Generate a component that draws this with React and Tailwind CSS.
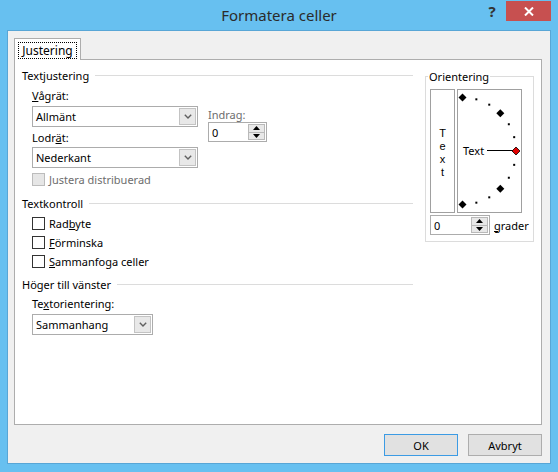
import React from "react";

const font = { fontFamily: '"Noto Sans", "Open Sans", sans-serif' };

function Chevron() {
  return (
    <svg width="8" height="5" viewBox="0 0 8 5">
      <path d="M0.8 0.8 L4 4 L7.2 0.8" fill="none" stroke="#606060" strokeWidth="1.4" />
    </svg>
  );
}

function Combo({ w, value }) {
  return (
    <div className={`${w} h-[21px] border border-[#acacac] bg-white flex items-stretch`}>
      <div className="flex-1 pl-[3px] flex items-center text-black leading-none">{value}</div>
      <div className="w-[17px] m-[1px] border border-[#c3c3c3] bg-[#e8e8e8] flex items-center justify-center">
        <Chevron />
      </div>
    </div>
  );
}

function Spinner({ w }) {
  return (
    <div className={`${w} h-[20px] border border-[#acacac] bg-white flex items-stretch`}>
      <div className="flex-1 pl-[3px] flex items-center leading-none text-black">0</div>
      <div className="w-[17px] flex flex-col my-[1px] mr-[1px]">
        <div className="flex-1 border border-[#b9b9b9] bg-[#e8e8e8] flex items-center justify-center">
          <svg width="7" height="4" viewBox="0 0 7 4"><path d="M0 4 L3.5 0 L7 4 Z" fill="#000" /></svg>
        </div>
        <div className="flex-1 border border-t-0 border-[#b9b9b9] bg-[#e8e8e8] flex items-center justify-center">
          <svg width="7" height="4" viewBox="0 0 7 4"><path d="M0 0 L3.5 4 L7 0 Z" fill="#000" /></svg>
        </div>
      </div>
    </div>
  );
}

function Check({ label, disabled }) {
  return (
    <div className="h-[13px] flex items-center">
      <div
        className={`w-[13px] h-[13px] border ${disabled ? "border-[#bcbcbc] bg-[#e6e6e6]" : "border-[#333333] bg-white"}`}
      />
      <div className={`ml-[4px] leading-none ${disabled ? "text-[#6d6d6d]" : "text-black"}`}>{label}</div>
    </div>
  );
}

function Header({ children }) {
  return (
    <div className="h-[16px] flex items-center">
      <div className="leading-none text-black whitespace-nowrap">{children}</div>
      <div className="flex-1 h-px bg-[#dcdcdc] ml-[6px]" />
    </div>
  );
}

function Arc() {
  const cx = 4.5, cy = 61, r = 53.5;
  const items = [];
  for (let i = 0; i <= 12; i++) {
    const a = ((90 - i * 15) * Math.PI) / 180;
    const x = cx + r * Math.cos(a);
    const y = cy - r * Math.sin(a);
    if (i === 6) {
      items.push(
        <path key={i} d={`M${x} ${y - 4} L${x + 4} ${y} L${x} ${y + 4} L${x - 4} ${y} Z`} fill="#e00000" stroke="#000" strokeWidth="0.8" />
      );
    } else if (i % 3 === 0) {
      items.push(
        <path key={i} d={`M${x} ${y - 4} L${x + 4} ${y} L${x} ${y + 4} L${x - 4} ${y} Z`} fill="#000" />
      );
    } else {
      items.push(<rect key={i} x={x - 1} y={y - 1} width="2" height="2" fill="#000" />);
    }
  }
  return (
    <svg width="63" height="122" viewBox="0 0 63 122" className="block">
      <line x1="29" y1="60.5" x2="55" y2="60.5" stroke="#000" strokeWidth="1" />
      {items}
    </svg>
  );
}

export default function App() {
  return (
    <div className="w-[558px] h-[472px] bg-[#67c0f0] flex flex-col text-[11px] overflow-hidden" style={font}>
      <div className="h-[30px] grid grid-cols-[1fr_auto_1fr]">
        <div />
        <div className="text-[15px] text-[#2b2b2b] leading-[30px]">Formatera celler</div>
        <div className="flex justify-end items-start pr-[7px]">
          <div className="w-[28px] h-[21px] flex items-center justify-center font-bold text-[15px] text-[#333] leading-none pt-[2px]">?</div>
          <div className="w-[45px] h-[20px] mt-[1px] bg-[#c75050] flex items-center justify-center">
            <svg width="10" height="9" viewBox="0 0 10 9">
              <path d="M1 0.5 L9 8.5 M9 0.5 L1 8.5" stroke="#fff" strokeWidth="2" />
            </svg>
          </div>
        </div>
      </div>
      <div className="mx-[7px] h-[434px] border border-[#58a6d6] bg-[#f0f0f0] flex flex-col px-[6px] pt-[7px]">
        <div className="relative z-10 w-[67px] h-[22px] -mb-[1px] bg-white border border-b-0 border-[#adadad] flex items-center justify-center">
          <div className="w-[59px] border border-dotted border-black h-[17px] mt-[2px] flex items-center justify-center leading-none text-black text-[12px]">Justering</div>
        </div>
        <div className="w-[528px] h-[366px] bg-white border border-[#adadad] flex pl-[7px] pt-[7px]">
          <div className="w-[391px] flex flex-col">
            <Header>Textjustering</Header>
            <div className="flex pl-[10px]">
              <div className="w-[166px] flex flex-col">
                <div className="mt-[4px] h-[16px] flex items-center leading-none"><span><span className="underline">V</span>ågrät:</span></div>
                <div className="mt-[3px]"><Combo w="w-[166px]" value="Allmänt" /></div>
                <div className="mt-[2px] h-[16px] flex items-center leading-none"><span>Lodr<span className="underline">ä</span>t:</span></div>
                <div className="mt-[2px]"><Combo w="w-[166px]" value="Nederkant" /></div>
                <div className="mt-[5px]"><Check label="Justera distribuerad" disabled /></div>
              </div>
              <div className="ml-[10px] flex flex-col">
                <div className="mt-[24px] h-[14px] flex items-center leading-none text-[#6d6d6d]">Indrag:</div>
                <div className="mt-[1px]"><Spinner w="w-[59px]" /></div>
              </div>
            </div>
            <div className="mt-[9px]"><Header>Textkontroll</Header></div>
            <div className="pl-[10px] mt-[6px] flex flex-col gap-[6px]">
              <Check label={<span>Rad<span className="underline">b</span>yte</span>} />
              <Check label={<span><span className="underline">F</span>örminska</span>} />
              <Check label={<span><span className="underline">S</span>ammanfoga celler</span>} />
            </div>
            <div className="mt-[8px]"><Header>Höger till vänster</Header></div>
            <div className="pl-[10px] flex flex-col">
              <div className="mt-[3px] h-[16px] flex items-center leading-none"><span>Te<span className="underline">x</span>torientering:</span></div>
              <div className="mt-[3px]"><Combo w="w-[121px]" value="Sammanhang" /></div>
            </div>
          </div>
          <div className="ml-[12px] mt-[9px] w-[109px] h-[166px] border border-[#dcdcdc] relative pl-[4px] pt-[12px]">
            <div className="absolute -top-[9px] left-[2px] bg-white px-[1px] h-[16px] flex items-center leading-none text-black">Orientering</div>
            <div className="flex gap-[2px]">
              <div
                className="w-[25px] h-[124px] border border-[#a0a0a0] flex flex-col items-center justify-center pt-[4px] leading-[13px] text-black"
                style={{ fontFamily: '"Liberation Sans", Arial, sans-serif' }}
              >
                <span>T</span><span>e</span><span>x</span><span>t</span>
              </div>
              <div className="w-[65px] h-[124px] border border-[#a0a0a0] relative">
                <Arc />
                <div className="absolute left-[5px] top-[52px] h-[16px] flex items-center leading-none text-black">Text</div>
              </div>
            </div>
            <div className="mt-[2px] flex items-center">
              <Spinner w="w-[60px]" />
              <div className="ml-[4px] leading-none text-black"><span className="underline">g</span>rader</div>
            </div>
          </div>
        </div>
        <div className="w-[528px] mt-[9px] flex justify-end gap-[10px]">
          <div className="w-[74px] h-[22px] border border-[#3c9be4] bg-[#e1e1e1] flex items-center justify-center leading-none text-black">OK</div>
          <div className="w-[74px] h-[22px] border border-[#adadad] bg-[#e1e1e1] flex items-center justify-center leading-none text-black">Avbryt</div>
        </div>
      </div>
    </div>
  );
}
